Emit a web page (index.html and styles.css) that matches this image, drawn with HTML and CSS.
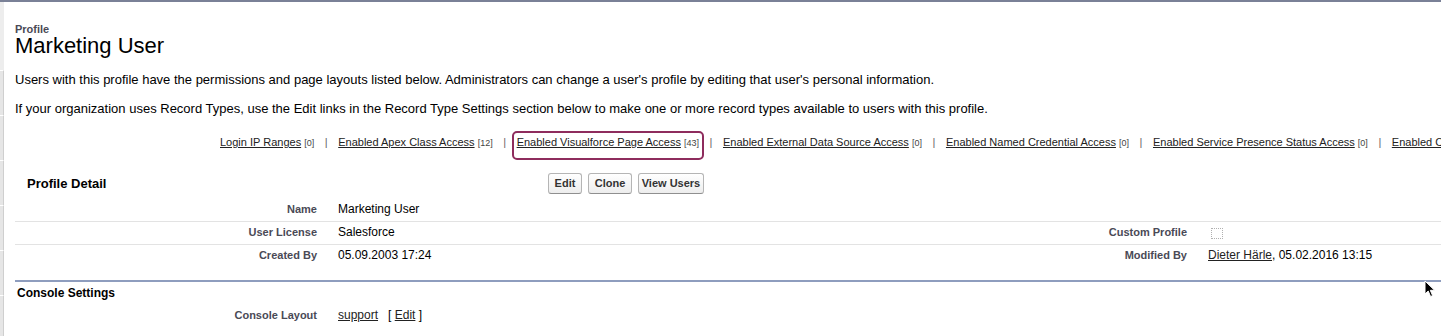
FILE: index.html
```html
<!DOCTYPE html>
<html lang="en">
<head>
    <meta charset="UTF-8">
    <title>Profile: Marketing User</title>
    <link rel="stylesheet" href="styles.css">
</head>
<body>
    <div class="page">
        <!-- left rail -->
        <div class="rail">
            <div class="rail_top"></div>
            <div class="rail_seg"></div>
            <div class="rail_seg"></div>
            <div class="rail_seg"></div>
            <div class="rail_seg"></div>
            <div class="rail_seg"></div>
            <div class="rail_seg"></div>
        </div>

        <div class="content">
            <!-- header -->
            <div class="page_type">Profile</div>
            <h1 class="page_title">Marketing User</h1>

            <p class="desc desc_first">Users with this profile have the permissions and page layouts listed below. Administrators can change a user's profile by editing that user's personal information.</p>
            <p class="desc">If your organization uses Record Types, use the Edit links in the Record Type Settings section below to make one or more record types available to users with this profile.</p>

            <!-- related list links -->
            <div class="links">
                <span class="link_item"><a href="#">Login IP Ranges</a> <span class="count">[0]</span></span>
                <span class="pipe">|</span>
                <span class="link_item"><a href="#">Enabled Apex Class Access</a> <span class="count">[12]</span></span>
                <span class="pipe">|</span>
                <span class="link_item highlight"><a href="#">Enabled Visualforce Page Access</a> <span class="count">[43]</span></span>
                <span class="pipe">|</span>
                <span class="link_item"><a href="#">Enabled External Data Source Access</a> <span class="count">[0]</span></span>
                <span class="pipe">|</span>
                <span class="link_item"><a href="#">Enabled Named Credential Access</a> <span class="count">[0]</span></span>
                <span class="pipe">|</span>
                <span class="link_item"><a href="#">Enabled Service Presence Status Access</a> <span class="count">[0]</span></span>
                <span class="pipe">|</span>
                <span class="link_item"><a href="#">Enabled Custom Permissions</a> <span class="count">[0]</span></span>
            </div>

            <!-- profile detail -->
            <div class="block_header">
                <h2 class="block_title">Profile Detail</h2>
                <div class="buttons">
                    <button class="btn btn_edit">Edit</button>
                    <button class="btn btn_clone">Clone</button>
                    <button class="btn btn_users">View Users</button>
                </div>
            </div>

            <div class="detail_row">
                <div class="label">Name</div>
                <div class="value">Marketing User</div>
                <div class="label"></div>
                <div class="value"></div>
            </div>
            <div class="detail_row">
                <div class="label">User License</div>
                <div class="value">Salesforce</div>
                <div class="label">Custom Profile</div>
                <div class="value"><span class="checkbox"></span></div>
            </div>
            <div class="detail_row last">
                <div class="label">Created By</div>
                <div class="value">05.09.2003 17:24</div>
                <div class="label">Modified By</div>
                <div class="value"><a href="#">Dieter Härle</a>, 05.02.2016 13:15</div>
            </div>

            <!-- console settings -->
            <div class="section">
                <h3 class="section_title">Console Settings</h3>
                <div class="detail_row last">
                    <div class="label">Console Layout</div>
                    <div class="value"><a href="#">support</a>&nbsp;&nbsp;&nbsp;[ <a href="#">Edit</a> ]</div>
                    <div class="label"></div>
                    <div class="value"></div>
                </div>
            </div>
        </div>
    </div>

    <!-- mouse pointer -->
    <svg class="cursor" width="12" height="18" viewBox="0 0 12 18">
        <path d="M1 1 L1 14 L4.2 11 L6.6 16.5 L8.6 15.6 L6.3 10.3 L10.6 10.3 Z" fill="#000" stroke="#fff" stroke-width="1"/>
    </svg>
</body>
</html>
```

FILE: styles.css
```css
* {
    box-sizing: border-box;
    margin: 0;
    padding: 0;
}

body {
    font-family: "Liberation Sans", Arial, sans-serif;
    color: #000;
    background-color: #fff;
    border-top: 2px solid #7a8197;
    overflow: hidden;
    height: 336px;
}

a {
    color: #222;
    text-decoration: underline;
}

.page {
    display: flex;
}

/* ---------- left rail ---------- */
.rail {
    width: 4px;
    flex-shrink: 0;
    display: flex;
    flex-direction: column;
    background-color: #ededed;
}
.rail_top {
    height: 68px;
}
.rail_seg {
    height: 45px;
    border-top: 1px solid #fff;
    border-right: 1px solid #cfcfcf;
    background-color: #e6e6e6;
}

.content {
    flex: 1;
    padding-left: 11px;
    min-width: 0;
}

/* ---------- header ---------- */
.page_type {
    margin-top: 21px;
    font-size: 11px;
    line-height: 12px;
    font-weight: bold;
    color: #4a4a56;
}
.page_title {
    font-size: 22px;
    line-height: 22px;
    font-weight: normal;
}

.desc {
    font-size: 13px;
    line-height: 16px;
    margin-top: 13px;
}
.desc_first {
    margin-top: 15px;
}

/* ---------- links row ---------- */
.links {
    margin-top: 18px;
    padding-left: 205px;
    font-size: 11px;
    line-height: 14px;
    white-space: nowrap;
}
.link_item a {
    color: #222;
}
.count {
    font-size: 9px;
    color: #444;
}
.pipe {
    color: #666;
    margin: 0 7.5px;
}
.highlight {
    position: relative;
}
.highlight::after {
    content: "";
    position: absolute;
    left: -5px;
    right: -5px;
    top: -5px;
    bottom: -12px;
    border: 2px solid #8e2c5d;
    border-radius: 5px;
}

/* ---------- detail block ---------- */
.block_header {
    display: flex;
    align-items: center;
    margin-top: 17px;
    height: 32px;
}
.block_title {
    width: 533px;
    padding-left: 12px;
    font-size: 13px;
    font-weight: bold;
}
.buttons {
    display: flex;
    gap: 6px;
}
.btn {
    font-family: "Liberation Sans", Arial, sans-serif;
    font-size: 11px;
    font-weight: bold;
    color: #333;
    height: 21px;
    padding: 0;
    border: 1px solid #b5b5b5;
    border-bottom-color: #8f8f8f;
    border-radius: 3px;
    background: linear-gradient(#ffffff, #ededed);
}
.btn_edit {
    width: 34px;
}
.btn_clone {
    width: 44px;
}
.btn_users {
    width: 66px;
}

.detail_row {
    display: grid;
    grid-template-columns: 313px 557px 313px 1fr;
    border-bottom: 1px solid #e3e3e3;
    font-size: 12px;
    line-height: 14px;
    padding: 3px 0 5px 0;
}
.detail_row.last {
    border-bottom: none;
}
.label {
    text-align: right;
    padding-right: 11px;
    font-size: 11px;
    font-weight: bold;
    color: #4a4a56;
}
.value {
    padding-left: 10px;
}
.checkbox {
    display: inline-block;
    width: 12px;
    height: 11px;
    margin-left: 3px;
    margin-top: 3px;
    border: 1px dotted #b0b0b0;
    vertical-align: top;
}

/* ---------- console settings ---------- */
.section {
    margin-top: 13px;
    border-top: 2px solid #8e9dbe;
}
.section_title {
    font-size: 12px;
    line-height: 14px;
    font-weight: bold;
    padding: 4px 0 0 2px;
}
.section .detail_row {
    margin-top: 5px;
}

.cursor {
    position: absolute;
    left: 1424px;
    top: 280px;
}
```
